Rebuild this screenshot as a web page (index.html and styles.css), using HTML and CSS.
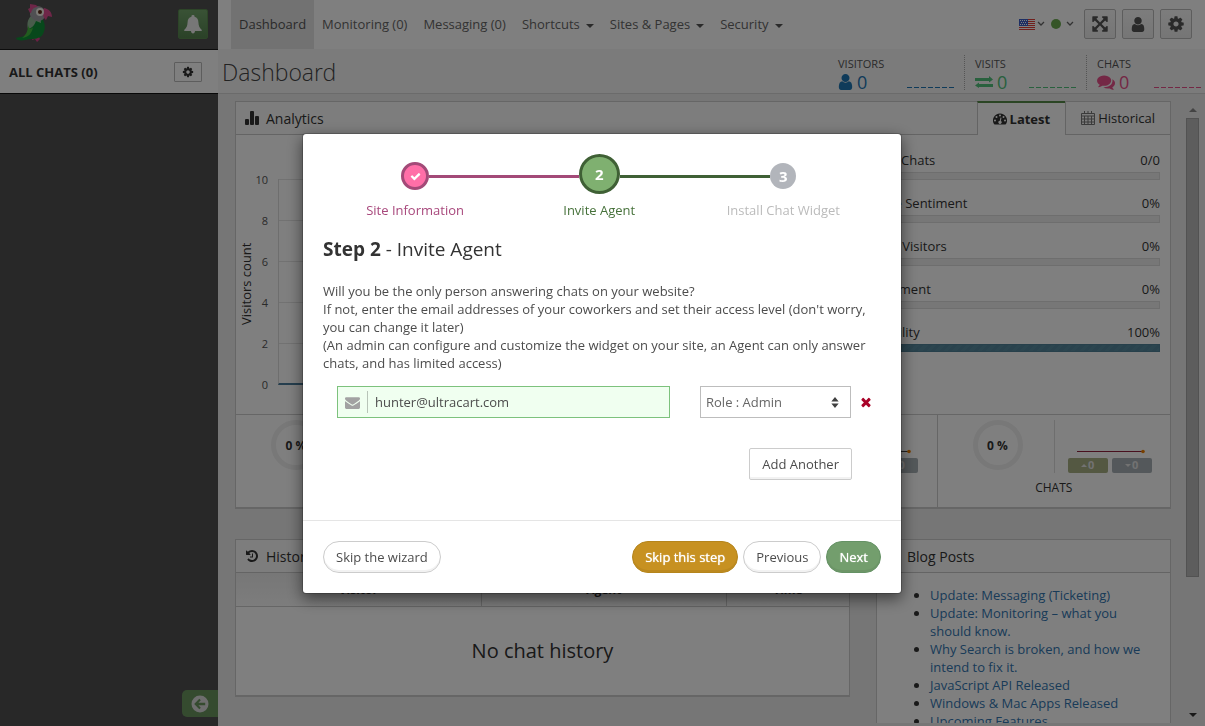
FILE: index.html
```html
<!DOCTYPE html>
<html lang="en">
<head>
    <meta charset="UTF-8">
    <meta name="viewport" content="width=device-width, initial-scale=1.0">
    <title>Dashboard</title>
    <link rel="stylesheet" href="styles.css">
</head>
<body>

<!-- Icon set -->
<svg class="icon-defs" aria-hidden="true">
    <symbol id="i-cog" viewBox="0 0 1792 1792"><path d="M1152 896q0-106-75-181t-181-75-181 75-75 181 75 181 181 75 181-75 75-181zm512-109v222q0 12-8 23t-20 13l-185 28q-19 54-39 91 35 50 107 138 10 12 10 25t-9 23q-27 37-99 108t-94 71q-12 0-26-9l-138-108q-44 23-91 38-16 136-29 186-7 28-36 28h-222q-14 0-24.5-8.5t-11.5-21.5l-28-184q-49-16-90-37l-141 107q-10 9-25 9-14 0-25-11-126-114-165-168-7-10-7-23 0-12 8-23 15-21 51-66.5t54-70.5q-27-50-41-99l-183-27q-13-2-21-12.5t-8-23.5v-222q0-12 8-23t19-13l186-28q14-46 39-92-40-57-107-138-10-12-10-24 0-10 9-23 26-36 98.5-107.5t94.5-71.5q13 0 26 10l138 107q44-23 91-38 16-136 29-186 7-28 36-28h222q14 0 24.5 8.5t11.5 21.5l28 184q49 16 90 37l142-107q9-9 24-9 13 0 25 10 129 119 165 170 7 8 7 22 0 12-8 23-15 21-51 66.5t-54 70.5q26 50 41 98l183 28q13 2 21 12.5t8 23.5z"/></symbol>
    <symbol id="i-user" viewBox="256 128 1280 1536"><path d="M1536 1399q0 109-62.500 187t-150.500 78h-854q-88 0-150.500-78t-62.500-187q0-85 8.500-160.500t31.500-152 58.500-131 94-89 134.500-34.500q131 128 313 128t313-128q76 0 134.500 34.500t94 89 58.500 131 31.500 152 8.500 160.500zm-256-887q0 159-112.500 271.500t-271.500 112.500-271.500-112.500-112.500-271.500 112.500-271.500 271.500-112.500 271.500 112.500 112.500 271.500z"/></symbol>
    <symbol id="i-expand" viewBox="0 0 1792 1792"><path d="M1411 541l-355 355 355 355 144-144q29-31 70-14 39 17 39 59v448q0 26-19 45t-45 19h-448q-42 0-59-40-17-39 14-69l144-144-355-355-355 355 144 144q31 30 14 69-17 40-59 40h-448q-26 0-45-19t-19-45v-448q0-42 40-59 39-17 69 14l144 144 355-355-355-355-144 144q-19 19-45 19-12 0-24-5-40-17-40-59v-448q0-26 19-45t45-19h448q42 0 59 40 17 39-14 69l-144 144 355 355 355-355-144-144q-31-30-14-69 17-40 59-40h448q26 0 45 19t19 45v448q0 42-39 59-13 5-25 5-26 0-45-19z"/></symbol>
    <symbol id="i-envelope" viewBox="0 0 1792 1792"><path d="M1792 710v794q0 66-47 113t-113 47h-1472q-66 0-113-47t-47-113v-794q44 49 101 87 362 246 497 345 57 42 92.500 65.500t94.500 48 110 24.500h2q51 0 110-24.500t94.500-48 92.500-65.500q170-123 498-345 57-39 100-87zm0-294q0 79-49 151t-122 123q-376 261-468 325-10 7-42.500 31t-54 38.500-52 32.500-57.500 27-50 9h-2q-23 0-50-9t-57.500-27-52-32.500-54-38.500-42.500-31q-91-64-262-182.500t-205-142.500q-62-42-117-115.500t-55-136.500q0-78 41.500-130t118.500-52h1472q65 0 112.500 47t47.500 113z"/></symbol>
    <symbol id="i-comments" viewBox="0 0 1792 1792"><path d="M1408 768q0 139-94 257t-256.500 186.500-353.500 68.500q-86 0-176-16-124 88-278 128-36 9-86 16h-3q-11 0-20.500-8t-11.500-21q-1-9 8-25 60-66 90-110t46-83q-124-72-195-177t-71-224q0-139 94-257t256.500-186.500 353.500-68.500 353.500 68.500 256.500 186.500 94 257zm384 256q0 120-71 224.500t-195 176.500q16 39 46 83t90 110q9 16 7 28-3 14-13 22t-22 7q-50-7-86-16-154-40-278-128-90 16-176 16-271 0-472-132 58 4 88 4 161 0 309-45t264-129q125-92 192-212t67-254q0-77-23-152 129 71 204 178t75 230z"/></symbol>
    <symbol id="i-history" viewBox="0 0 1792 1792"><path d="M1664 896q0 156-61 298t-164 245-245 164-298 61q-172 0-327-72.500t-264-204.500q-7-10-6.500-22.500t8.500-20.500l137-138q10-9 25-9 16 2 23 12 73 95 179 147t225 52q104 0 198.500-40.500t163.500-109.500 109.500-163.500 40.500-198.500-40.500-198.500-109.500-163.500-163.500-109.500-198.500-40.500q-98 0-188 35.500t-160 101.500l137 138q31 30 14 69-17 40-59 40h-448q-26 0-45-19t-19-45v-448q0-42 40-59 39-17 69 14l130 129q107-101 244.500-156.500t284.500-55.500q156 0 298 61t245 164 164 245 61 298zm-640-288v448q0 14-9 23t-23 9h-320q-14 0-23-9t-9-23v-64q0-14 9-23t23-9h224v-352q0-14 9-23t23-9h64q14 0 23 9t9 23z"/></symbol>
    <symbol id="i-check" viewBox="0 0 1792 1792"><path d="M1671 566q0 40-28 68l-724 724-136 136q-28 28-68 28t-68-28l-136-136-362-362q-28-28-28-68t28-68l136-136q28-28 68-28t68 28l294 295 656-657q28-28 68-28t68 28l136 136q28 28 28 68z"/></symbol>
    <symbol id="i-times" viewBox="0 0 1792 1792"><path d="M1490 1322q0 40-28 68l-136 136q-28 28-68 28t-68-28l-294-294-294 294q-28 28-68 28t-68-28l-136-136q-28-28-28-68t28-68l294-294-294-294q-28-28-28-68t28-68l136-136q28-28 68-28t68 28l294 294 294-294q28-28 68-28t68 28l136 136q28 28 28 68t-28 68l-294 294 294 294q28 28 28 68z"/></symbol>
    <symbol id="i-bell" viewBox="0 0 18 19"><path d="M9 0a1.500 1.500 0 0 0-1.500 1.800C4.700 2.500 3.700 4.700 3.600 7.200 3.400 11 2.500 12.900.4 14.700c-.6.600-.2 1.300.4 1.300H7c0 1.500.9 2.500 2 2.500s2-1 2-2.500h6.200c.6 0 1-.7.4-1.300-2.100-1.800-3-3.700-3.200-7.500-.1-2.500-1.100-4.700-3.900-5.400A1.500 1.500 0 0 0 9 0z"/></symbol>
    <symbol id="i-bars" viewBox="0 0 14 14"><rect x="0" y="8" width="4" height="6" rx="1"/><rect x="5" y="0" width="4" height="14" rx="1"/><rect x="10" y="5" width="4" height="9" rx="1"/></symbol>
    <symbol id="i-exchange" viewBox="0 0 18 12"><path d="M0 2h14V0l4 3.500-4 3V5H0zM18 8H4V6.500L0 9.500 4 12v-1h14z"/></symbol>
    <symbol id="i-tachometer" viewBox="0 0 14 12"><path fill-rule="evenodd" d="M7 .5a7 7 0 0 0-6 10.600q.2.400.7.400h10.600q.5 0 .7-.4A7 7 0 0 0 7 .5zM2 6.500a1 1 0 1 1 0 2 1 1 0 0 1 0-2zM3.500 3a1 1 0 1 1 0 2 1 1 0 0 1 0-2zM7 1.500a1 1 0 1 1 0 2 1 1 0 0 1 0-2zM10.500 3a1 1 0 1 1 0 2 1 1 0 0 1 0-2zM12 6.500a1 1 0 1 1 0 2 1 1 0 0 1 0-2zM7.500 4.500l1 .2-.7 3.200a1.600 1.600 0 1 1-1-.2z"/></symbol>
    <symbol id="i-calendar" viewBox="0 0 14 14"><path d="M.5 2.500h13v11H.5zM.5 5h13M.5 8h13M.5 11h13M3.500 5v8M7 5v8M10.500 5v8M3.500 0v3M7 0v3M10.500 0v3" fill="none" stroke="currentColor"/></symbol>
    <symbol id="i-chevron" viewBox="0 0 8 6"><path d="M1 1l3 3 3-3" fill="none" stroke="currentColor" stroke-width="1.300"/></symbol>
    <symbol id="i-back" viewBox="0 0 18 18"><path fill-rule="evenodd" d="M9 .5a8.500 8.500 0 1 0 0 17 8.500 8.500 0 0 0 0-17zM8.300 3.800l1.500 1.500-2.400 2.500h6.800v2.400H7.400l2.400 2.500-1.500 1.500L3.200 9z"/></symbol>
    <symbol id="i-sort" viewBox="0 0 8 12"><path d="M4 0l4 5H0zM0 7h8l-4 5z"/></symbol>
    <symbol id="i-spark" viewBox="0 0 68 5"><path d="M0 2.500h65" stroke="currentColor"/><circle cx="66" cy="2.500" r="1.800" fill="#f08000"/></symbol>
</svg>

<!-- Chats sidebar -->
<aside class="sidebar">
    <div class="brand">
        <svg class="parrot" viewBox="0 0 36 38" role="img" aria-label="Parrot logo">
            <path d="M17 32l-1 4 3-1 2 3 3-3-2-4z" fill="#d9418a"/>
            <path d="M15 13c-1 8-1 14-4 18-3 2-7 1.500-11 3 0 3 8 3 13 1 6 .5 12-1 14-5 3-6 2-11-1-16z" fill="#0f9136"/>
            <path d="M15 12c-4 4-4 9-3 13 4-1 6-3 8-8l5 2-1-7z" fill="#93b897"/>
            <path d="M12 21c1 5 4 4 5 2-1 6-4 10-11 11 3-2 6-6 6-13z" fill="#45b83f"/>
            <path d="M14 11V5l7-3c6 0 8 4 8 8s-2 6-5 7c-4 0-8-1-10-6z" fill="#a0a0a6"/>
            <path d="M14 9l-2-4 2-1 0-4 6 1 2 2c-4 0-6 2-7 6z" fill="#dd4d91"/>
            <path d="M28 4c5 1 8 4 8 9l-4-1-2 4c-3-2-4-8-2-12z" fill="#df4c90"/>
            <circle cx="24" cy="8" r="4" fill="#f6f3ea"/>
            <circle cx="24" cy="8" r="2" fill="#5b2c18"/>
        </svg>
        <button type="button" class="bell" aria-label="Notifications"><svg><use href="#i-bell"/></svg></button>
    </div>
    <div class="chats-head">
        <h2>ALL CHATS (0)</h2>
        <button type="button" class="chats-cog" aria-label="Chat settings"><svg><use href="#i-cog"/></svg></button>
    </div>
    <button type="button" class="collapse" aria-label="Collapse sidebar"><svg><use href="#i-back"/></svg></button>
</aside>

<main class="main">
    <header class="topbar">
        <nav class="topnav">
            <a href="#" class="active">Dashboard</a>
            <a href="#">Monitoring (0)</a>
            <a href="#">Messaging (0)</a>
            <a href="#" class="has-caret">Shortcuts</a>
            <a href="#" class="has-caret">Sites &amp; Pages</a>
            <a href="#" class="has-caret">Security</a>
        </nav>
        <div class="tools">
            <a href="#" class="picker" aria-label="Language">
                <svg class="flag" viewBox="0 0 16 11">
                    <rect width="16" height="11" fill="#fff"/>
                    <path d="M0 .5h16M0 2.500h16M0 4.500h16M0 6.500h16M0 8.500h16M0 10.500h16" stroke="#e0403a"/>
                    <rect width="9" height="7" fill="#3c5ec8"/>
                    <path d="M1 1.500h7M2 3.500h6M1 5.500h7" stroke="#fff" stroke-dasharray="1 1"/>
                </svg>
                <svg class="chevron"><use href="#i-chevron"/></svg>
            </a>
            <a href="#" class="picker" aria-label="Status">
                <span class="dot"></span>
                <svg class="chevron"><use href="#i-chevron"/></svg>
            </a>
            <button type="button" class="tool" aria-label="Full screen"><svg><use href="#i-expand"/></svg></button>
            <button type="button" class="tool" aria-label="Profile"><svg class="user"><use href="#i-user"/></svg></button>
            <button type="button" class="tool" aria-label="Settings"><svg><use href="#i-cog"/></svg></button>
        </div>
    </header>

    <div class="ribbon">
        <h1>Dashboard</h1>
        <ul class="sparks">
            <li class="blue"><span class="spark-name">VISITORS</span><span class="spark-row"><svg><use href="#i-user"/></svg>0<i></i></span></li>
            <li class="green"><span class="spark-name">VISITS</span><span class="spark-row"><svg class="exchange"><use href="#i-exchange"/></svg>0<i></i></span></li>
            <li class="pink"><span class="spark-name">CHATS</span><span class="spark-row"><svg class="comments"><use href="#i-comments"/></svg>0<i></i></span></li>
        </ul>
    </div>

    <div class="scroller">
        <div class="content">

            <!-- Analytics -->
            <section class="panel">
                <header class="panel-head">
                    <svg><use href="#i-bars"/></svg>
                    <h2>Analytics</h2>
                    <div class="tabs">
                        <a href="#" class="tab on"><svg><use href="#i-tachometer"/></svg>Latest</a>
                        <a href="#" class="tab"><svg><use href="#i-calendar"/></svg>Historical</a>
                    </div>
                </header>
                <div class="analytics">
                    <div class="chart">
                        <span class="axis-title">Visitors count</span>
                        <ol class="ticks"><li>10</li><li>8</li><li>6</li><li>4</li><li>2</li><li>0</li></ol>
                        <div class="plot"></div>
                    </div>
                    <ul class="meters">
                        <li><span>Missed Chats</span><span>0/0</span><div class="bar"></div></li>
                        <li><span>Positive Sentiment</span><span>0%</span><div class="bar"></div></li>
                        <li><span>Unique Visitors</span><span>0%</span><div class="bar"></div></li>
                        <li><span>Engagement</span><span>0%</span><div class="bar"></div></li>
                        <li><span>Availability</span><span>100%</span><div class="bar full"></div></li>
                    </ul>
                </div>
                <div class="cells">
                    <div class="cell">
                        <div class="ring">0 %</div>
                        <div class="trend"><svg class="t-blue"><use href="#i-spark"/></svg><span class="up">0</span><span class="down">0</span></div>
                        <p>VISITORS</p>
                    </div>
                    <div class="cell">
                        <div class="ring">0 %</div>
                        <div class="trend"><svg class="t-blue"><use href="#i-spark"/></svg><span class="up">0</span><span class="down">0</span></div>
                        <p>VISITS</p>
                    </div>
                    <div class="cell">
                        <div class="ring">0 %</div>
                        <div class="trend"><svg class="t-dark"><use href="#i-spark"/></svg><span class="up">0</span><span class="down">0</span></div>
                        <p>PAGES</p>
                    </div>
                    <div class="cell">
                        <div class="ring">0 %</div>
                        <div class="trend"><svg class="t-red"><use href="#i-spark"/></svg><span class="up">0</span><span class="down">0</span></div>
                        <p>CHATS</p>
                    </div>
                </div>
            </section>

            <div class="columns">
                <!-- History -->
                <section class="panel history">
                    <header class="panel-head">
                        <svg><use href="#i-history"/></svg>
                        <h2>History</h2>
                    </header>
                    <table>
                        <thead><tr><th>Visitor</th><th>Agent</th><th>Time</th></tr></thead>
                        <tbody><tr><td colspan="3">No chat history</td></tr></tbody>
                    </table>
                </section>

                <!-- Blog -->
                <section class="panel blog">
                    <header class="panel-head">
                        <svg></svg>
                        <h2>Blog Posts</h2>
                    </header>
                    <ul>
                        <li><a href="#">Update: Messaging (Ticketing)</a></li>
                        <li><a href="#">Update: Monitoring – what you should know.</a></li>
                        <li><a href="#">Why Search is broken, and how we intend to fix it.</a></li>
                        <li><a href="#">JavaScript API Released</a></li>
                        <li><a href="#">Windows &amp; Mac Apps Released</a></li>
                        <li><a href="#">Upcoming Features</a></li>
                    </ul>
                </section>
            </div>
        </div>
        <div class="scrollbar" aria-hidden="true">
            <span class="arrow-up"></span>
            <div class="track"><div class="thumb"></div></div>
            <span class="arrow-down"></span>
        </div>
    </div>
</main>

<!-- Setup wizard -->
<div class="backdrop">
    <form class="modal" role="dialog" aria-labelledby="wizardTitle">
        <div class="modal-body">
            <ol class="steps">
                <li class="done">
                    <div class="step-row"><span class="line"></span><span class="circle"><svg><use href="#i-check"/></svg></span><span class="line"></span></div>
                    Site Information
                </li>
                <li class="current">
                    <div class="step-row"><span class="line"></span><span class="circle">2</span><span class="line"></span></div>
                    Invite Agent
                </li>
                <li class="todo">
                    <div class="step-row"><span class="line"></span><span class="circle">3</span><span class="line"></span></div>
                    Install Chat Widget
                </li>
            </ol>
            <h3 id="wizardTitle"><strong>Step 2</strong> - Invite Agent</h3>
            <p>Will you be the only person answering chats on your website?<br>
                If not, enter the email addresses of your coworkers and set their access level (don't worry, you can change it later)<br>
                (An admin can configure and customize the widget on your site, an Agent can only answer chats, and has limited access)</p>
            <div class="agent">
                <div class="email">
                    <label for="email" aria-label="Email"><svg><use href="#i-envelope"/></svg></label>
                    <input type="email" id="email" value="hunter@ultracart.com">
                </div>
                <div class="role">
                    <select id="role" aria-label="Role">
                        <option selected>Role : Admin</option>
                        <option>Role : Agent</option>
                    </select>
                    <svg><use href="#i-sort"/></svg>
                </div>
                <button type="button" class="remove" aria-label="Remove"><svg><use href="#i-times"/></svg></button>
            </div>
            <div class="add"><button type="button" class="btn">Add Another</button></div>
        </div>
        <footer class="modal-foot">
            <button type="button" class="btn round first">Skip the wizard</button>
            <button type="button" class="btn round warning">Skip this step</button>
            <button type="button" class="btn round">Previous</button>
            <button type="submit" class="btn round success">Next</button>
        </footer>
    </form>
</div>

</body>
</html>
```
FILE: styles.css
```css
* {
    box-sizing: border-box;
}

body {
    margin: 0;
    display: flex;
    height: 100vh;
    overflow: hidden;
    font-family: "Open Sans", Arial, sans-serif;
    font-size: 13px;
    line-height: 18px;
    color: #333;
    background-color: #ececec;
}

h1, h2, h3, p, ul, ol {
    margin: 0;
    padding: 0;
    font-weight: normal;
}

ul, ol {
    list-style: none;
}

a {
    color: #3276b1;
    text-decoration: none;
}

button, input, select {
    font: inherit;
    color: inherit;
    margin: 0;
}

button {
    display: flex;
    align-items: center;
    justify-content: center;
    padding: 0;
    cursor: pointer;
}

svg {
    flex: none;
    fill: currentColor;
}

.icon-defs {
    position: absolute;
    width: 0;
    height: 0;
}

/* Sidebar */
.sidebar {
    display: flex;
    flex-direction: column;
    flex: none;
    width: 218px;
    background-color: #505050;
}

.brand {
    display: flex;
    align-items: center;
    justify-content: space-between;
    height: 50px;
    padding: 0 10px 1px 16px;
    border-bottom: 1px solid #1a1a1a;
}

.parrot {
    width: 36px;
    height: 38px;
    margin-bottom: 3px;
}

.bell {
    width: 30px;
    height: 30px;
    border: 1px solid #5a8a50;
    border-radius: 2px;
    background: linear-gradient(#73a56b, #568450);
    color: #eee;
}

.bell svg {
    width: 18px;
    height: 19px;
}

.chats-head {
    display: flex;
    align-items: center;
    justify-content: space-between;
    height: 44px;
    padding: 0 16px 0 9px;
    border-bottom: 1px solid #111;
    background-color: #fff;
}

.chats-head h2 {
    font-size: 13px;
    font-weight: bold;
}

.chats-cog {
    width: 28px;
    height: 20px;
    border: 1px solid #bbb;
    border-radius: 1px;
    background-color: #fff;
}

.chats-cog svg {
    width: 12px;
    height: 12px;
}

.collapse {
    align-self: flex-end;
    width: 36px;
    height: 27px;
    margin: auto 0 9px;
    border: 0;
    border-radius: 5px 0 0 5px;
    background-color: #6a965f;
    color: #ddd;
}

.collapse svg {
    width: 18px;
    height: 18px;
}

/* Top bar */
.main {
    display: flex;
    flex-direction: column;
    flex: 1;
    min-width: 0;
}

.topbar {
    display: flex;
    justify-content: space-between;
    flex: none;
    height: 49px;
    padding: 0 13px;
    background-color: #fff;
}

.topnav {
    display: flex;
}

.topnav a {
    padding: 0 8px;
    line-height: 48px;
    color: #666;
}

.topnav .active {
    background-color: #e4e4e4;
    color: #555;
}

.has-caret::after {
    content: "";
    display: inline-block;
    margin-left: 6px;
    border: 4px solid transparent;
    border-top-color: #555;
    border-bottom: 0;
    vertical-align: 1px;
}

.tools {
    display: flex;
    align-items: center;
    gap: 6px;
    padding-bottom: 1px;
}

.picker {
    display: flex;
    align-items: center;
    gap: 2px;
    color: #666;
}

.flag {
    width: 16px;
    height: 11px;
}

.chevron {
    width: 8px;
    height: 6px;
}

.dot {
    width: 10px;
    height: 10px;
    margin-right: 3px;
    border-radius: 50%;
    background-color: #6bab4f;
}

.tool {
    width: 32px;
    height: 30px;
    border: 1px solid #bbb;
    border-radius: 2px;
    background: linear-gradient(#fafafa, #ececec);
    color: #555;
}

.picker + .tool {
    margin-left: 4px;
}

.tool svg {
    width: 18px;
    height: 18px;
}

.tool .user {
    width: 14px;
    height: 15px;
}

/* Ribbon */
.ribbon {
    display: flex;
    justify-content: space-between;
    flex: none;
    height: 45px;
    padding: 0 4px;
    border-bottom: 1px solid #d6d6d6;
    background-color: #f7f7f7;
}

.ribbon h1 {
    font-family: "Open Sans Light", "Open Sans", Arial, sans-serif;
    font-size: 23px;
    font-weight: 300;
    line-height: 46px;
    color: #444;
}

.sparks {
    display: flex;
    padding-top: 6px;
}

.sparks li {
    width: 122px;
    height: 35px;
    padding: 0 10px;
}

.sparks li + li {
    border-left: 1px dotted #aaa;
}

.sparks li:first-child {
    width: 136px;
}

.sparks li:last-child {
    width: 115px;
    padding-right: 0;
}

.spark-name {
    display: block;
    font-size: 11px;
    color: #555;
}

.spark-row {
    display: flex;
    align-items: center;
    gap: 4px;
    font-size: 18px;
}

.spark-row svg {
    width: 15px;
    height: 16px;
}

.spark-row .exchange {
    width: 18px;
    height: 12px;
}

.spark-row .comments {
    width: 18px;
    height: 18px;
}

.spark-row i {
    width: 47px;
    height: 1px;
    margin: 10px 0 0 auto;
    background: repeating-linear-gradient(90deg, currentColor 0 5px, transparent 5px 7px);
}

.blue .spark-row {
    color: #1f77b4;
}

.green .spark-row {
    color: #52c27c;
}

.pink .spark-row {
    color: #e8508a;
}

/* Scroll area */
.scroller {
    display: flex;
    flex: 1;
    min-height: 0;
    margin-bottom: 3px;
}

.content {
    flex: 1;
    min-width: 0;
    padding: 7px 15px 0 17px;
    overflow: hidden;
}

.scrollbar {
    display: flex;
    flex-direction: column;
    align-items: center;
    width: 13px;
    margin-right: 6px;
    padding: 14px 0 6px;
}

.arrow-up,
.arrow-down {
    border: 4px solid transparent;
}

.arrow-up {
    border-top: 0;
    border-bottom-color: #888;
}

.arrow-down {
    border-bottom: 0;
    border-top-color: #333;
}

.track {
    flex: 1;
    align-self: stretch;
    margin: 6px 0;
}

.thumb {
    height: 78%;
    border: 1px solid #a4a4a4;
    background-color: #bbb;
}

/* Panels */
.panel {
    border: 1px solid #ccc;
    border-bottom-width: 2px;
    background-color: #fff;
}

.panel-head {
    display: flex;
    align-items: center;
    height: 33px;
    padding-left: 9px;
    border-bottom: 1px solid #c8c8c8;
    background-color: #fafafa;
}

.panel-head > svg {
    width: 14px;
    height: 14px;
    margin-right: 7px;
}

.panel-head h2 {
    padding-top: 1px;
    font-size: 14px;
}

.tabs {
    display: flex;
    align-self: stretch;
    margin-left: auto;
}

.tab {
    display: flex;
    align-items: center;
    gap: 3px;
    padding: 0 15px;
    border-left: 1px solid #c8c8c8;
    color: #333;
}

.tab.on {
    height: 34px;
    margin-top: -1px;
    border-top: 2px solid #568a48;
    background-color: #fff;
    font-weight: bold;
}

.tab svg {
    width: 14px;
    height: 14px;
    color: #777;
}

.tab.on svg {
    color: #333;
}

.analytics {
    display: flex;
    height: 280px;
    padding: 16px 10px 0 2px;
    border-bottom: 1px solid #ccc;
}

.chart {
    display: flex;
    flex: 1;
    height: 255px;
    padding-top: 8px;
}

.axis-title {
    writing-mode: vertical-rl;
    transform: rotate(180deg);
    width: 16px;
    height: 250px;
    line-height: 16px;
    text-align: center;
}

.ticks {
    width: 14px;
    font-size: 11px;
    line-height: 41px;
    text-align: right;
    color: #555;
}

.plot {
    flex: 1;
    height: 206px;
    margin: 20px 30px 0 10px;
    border-left: 1px solid #ddd;
    border-bottom: 2px solid #4a7c9c;
    background: repeating-linear-gradient(#e4e4e4 0 1px, transparent 1px 41px);
}

.meters {
    width: 305px;
}

.meters li {
    display: grid;
    grid-template-columns: 1fr auto;
    row-gap: 3px;
    margin-bottom: 14px;
}

.bar {
    grid-column: 1 / 3;
    height: 8px;
    border: 1px solid #dcdcdc;
    background-color: #eee;
}

.bar.full {
    border-color: #4f8196;
    background: repeating-linear-gradient(135deg, #578a9f 0 3px, #52859a 3px 6px);
}

.cells {
    display: grid;
    grid-template-columns: repeat(4, 1fr);
}

.cell {
    display: grid;
    grid-template-columns: 1fr 1fr;
    align-content: start;
    row-gap: 6px;
    height: 92px;
    padding-top: 5px;
}

.cell + .cell {
    border-left: 1px solid #ccc;
}

.ring {
    width: 50px;
    height: 50px;
    margin-left: 35px;
    border: 5px solid #f0f0f0;
    border-radius: 50%;
    font-size: 12px;
    font-weight: bold;
    line-height: 42px;
    text-align: center;
}

.trend {
    display: flex;
    flex-wrap: wrap;
    gap: 4px;
    align-content: flex-end;
    height: 53px;
    padding-left: 13px;
    border-left: 1px solid #ddd;
}

.trend svg {
    width: 68px;
    height: 5px;
    margin: 0 9px;
}

.t-blue {
    color: #36a;
}

.t-dark {
    color: #444;
}

.t-red {
    color: #90203c;
}

.trend span {
    width: 40px;
    height: 15px;
    border-radius: 2px;
    font-size: 11px;
    font-weight: bold;
    line-height: 14px;
    text-align: center;
    color: #e4e4e4;
}

.up {
    background-color: #a8b084;
}

.down {
    background-color: #a8b1b6;
}

.up::before,
.down::before {
    content: "";
    display: inline-block;
    margin-right: 1px;
    border: 3px solid transparent;
    vertical-align: 2px;
}

.up::before {
    border-top: 0;
    border-bottom-color: #e4e4e4;
}

.down::before {
    border-bottom: 0;
    border-top-color: #e4e4e4;
}

.cell p {
    grid-column: 1 / 3;
    font-size: 12px;
    text-align: center;
}

.columns {
    display: grid;
    grid-template-columns: 615fr 295fr;
    gap: 26px;
    align-items: start;
    margin-top: 30px;
}

.history table {
    width: 100%;
    border-collapse: collapse;
    table-layout: fixed;
}

.history th {
    width: 40%;
    height: 33px;
    padding: 2px 0 0;
    border-bottom: 1px solid #ccc;
    background: linear-gradient(#eee, #fafafa);
    font-size: 12px;
}

.history th + th {
    border-left: 1px solid #ccc;
}

.history th:last-child {
    width: 20%;
}

.history td {
    height: 89px;
    padding: 0;
    font-size: 20px;
    text-align: center;
}

.blog ul {
    padding: 13px 20px 18px 53px;
    list-style: disc;
}

.blog li::marker {
    color: #333;
}

/* Wizard dialog */
.backdrop {
    position: fixed;
    inset: 0;
    display: flex;
    align-items: flex-start;
    justify-content: center;
    padding: 133px 1px 0 0;
    background-color: rgba(0, 0, 0, 0.5);
}

.modal {
    width: 600px;
    border: 1px solid rgba(0, 0, 0, 0.2);
    border-radius: 4px;
    background-color: #fff;
    background-clip: padding-box;
    box-shadow: 0 5px 15px rgba(0, 0, 0, 0.5);
}

.modal-body {
    padding: 20px 20px 40px;
}

.steps {
    display: flex;
}

.steps li {
    width: 33%;
    text-align: center;
}

.step-row {
    display: flex;
    align-items: center;
    height: 44px;
    margin-bottom: 3px;
}

.line {
    flex: 1;
    height: 3px;
    background-color: #3f6035;
}

.done .line,
.current .line:first-child {
    background-color: #a34a78;
}

.done .line:first-child,
.todo .line:last-child {
    background-color: transparent;
}

.circle {
    display: flex;
    align-items: center;
    justify-content: center;
    width: 28px;
    height: 28px;
    border-radius: 50%;
    color: #fff;
    font-size: 15px;
    font-weight: bold;
}

.done {
    color: #a8487c;
}

.done .circle {
    border: 3px solid #a34a78;
    background-color: #ff6fa8;
}

.done svg {
    width: 11px;
    height: 11px;
}

.current {
    color: #46713a;
}

.current .circle {
    align-self: flex-start;
    width: 41px;
    height: 40px;
    border: 3px solid #3f6035;
    background-color: #7fb070;
}

.todo {
    color: #bbb;
}

.todo .circle {
    width: 26px;
    height: 26px;
    background-color: #b2b5bb;
}

.modal h3 {
    margin: 18px 0 21px;
    font-size: 19px;
    line-height: 24px;
}

.modal p {
    color: #4c4c4c;
}

.agent {
    display: grid;
    grid-template-columns: 1fr 151px 30px;
    margin: 14px 0 30px 14px;
}

.email {
    position: relative;
    margin-right: 30px;
}

.email label {
    position: absolute;
    top: 5px;
    left: 1px;
    display: flex;
    align-items: center;
    justify-content: center;
    width: 30px;
    height: 22px;
    border-right: 1px solid #b8c4b8;
    color: #a2a2a2;
}

.email svg {
    width: 15px;
    height: 15px;
}

.email input {
    display: block;
    width: 100%;
    height: 32px;
    padding: 0 10px 0 37px;
    border: 1px solid #7dc27d;
    border-radius: 0;
    background-color: #f0fff0;
    color: #4c4c4c;
}

.role {
    position: relative;
}

.role select {
    display: block;
    width: 100%;
    height: 32px;
    padding: 0 5px;
    border: 1px solid #bdbdbd;
    border-radius: 0;
    appearance: none;
    background-color: #fff;
    color: #666;
}

.role svg {
    position: absolute;
    top: 11px;
    right: 12px;
    width: 8px;
    height: 11px;
    color: #404040;
    pointer-events: none;
}

.remove {
    border: 0;
    background: none;
    color: #a90329;
}

.remove svg {
    width: 14px;
    height: 14px;
}

.add {
    display: flex;
    justify-content: flex-end;
    padding-right: 29px;
}

.btn {
    height: 32px;
    padding: 0 12px;
    border: 1px solid #ccc;
    border-radius: 2px;
    background-color: #fff;
    box-shadow: inset 0 -2px 0 rgba(0, 0, 0, 0.05);
    color: #4c4c4c;
}

.btn.round {
    border-radius: 16px;
}

.btn.warning,
.btn.success {
    color: #fff;
    text-shadow: 0 0 1px #fff;
}

.btn.warning {
    border-color: #b5851c;
    background-color: #c79121;
}

.btn.success {
    border-color: #659265;
    background-color: #739e6d;
}

.modal-foot {
    display: flex;
    gap: 5px;
    padding: 20px;
    border-top: 1px solid #e5e5e5;
}

.first {
    margin-right: auto;
}
```
